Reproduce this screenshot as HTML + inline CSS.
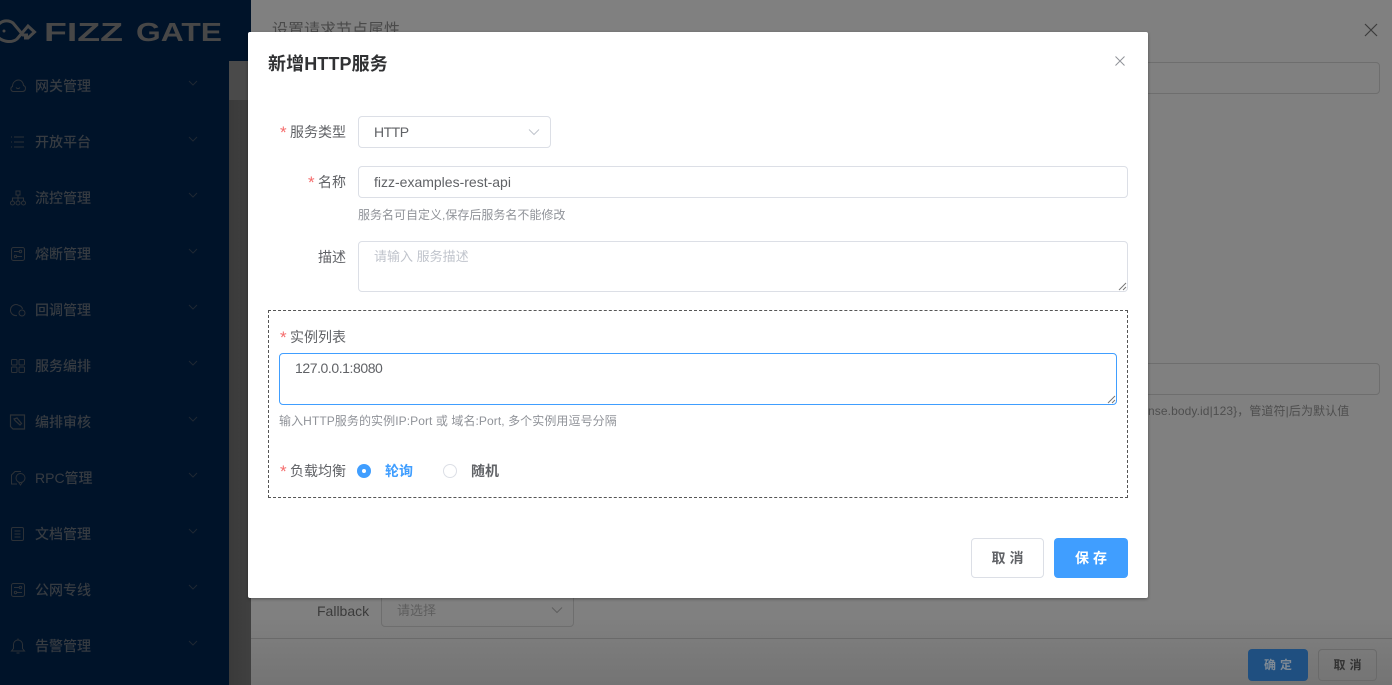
<!DOCTYPE html>
<html lang="zh-CN">
<head>
<meta charset="utf-8">
<title>新增HTTP服务</title>
<style>
html,body{margin:0;padding:0;width:1392px;height:685px;overflow:hidden;background:#808080}
body{position:relative;font-family:"Liberation Sans","Noto Sans CJK SC",sans-serif;font-size:14px;color:#606266}
.a{position:absolute;box-sizing:border-box;white-space:nowrap}
.t{position:absolute;white-space:nowrap;line-height:20px}
.side{left:0;top:0;width:229px;height:685px;background:#001329}
.navtop{left:229px;top:0;width:22px;height:61px;background:#001329}
.strip{left:229px;top:61px;width:22px;height:624px;background:linear-gradient(90deg,#3a3a3a,#404040)}
.strip2{left:229px;top:61px;width:22px;height:39px;background:#4a4a4a}
.panel{left:251px;top:0;width:1141px;height:685px;background:linear-gradient(180deg,#808080 0,#808080 90%,#747474 100%)}
.mi{position:absolute;left:35px;color:#363b41;font-size:14px;line-height:20px;font-weight:500}
.ic{position:absolute;left:9px;width:18px;height:18px;fill:none;stroke:#2c3137;stroke-width:1}
.ch{position:absolute;left:188px;width:10px;height:7px;fill:none;stroke:#1e2833;stroke-width:1}
.modal{left:248px;top:32px;width:900px;height:566px;background:#fff;border-radius:2px;box-shadow:0 1px 3px rgba(0,0,0,.35)}
.inp{border:1px solid #dcdfe6;border-radius:4px;background:#fff}
.lab{color:#606266;font-size:14px}
.star{color:#f56c6c;font-size:17px;font-weight:400}
.help{color:#909399;font-size:12px}
.btn{border-radius:4px;text-align:center;font-size:14px;letter-spacing:4px;text-indent:4px;font-weight:700}
</style>
</head>
<body>

<div class="a panel"></div>
<div class="t" style="left:272px;top:21px;font-size:16px;color:#4a4a4a">设置请求节点属性</div>
<svg class="a" style="left:1364px;top:23px" width="14" height="14" fill="none" stroke="#3c3c3c" stroke-width="1.2"><path d="M1 1L13 13M13 1L1 13"/></svg>
<div class="a" style="left:1100px;top:62px;width:280px;height:32px;border:1px solid #6e6e6e;border-radius:4px"></div>
<div class="a" style="left:1100px;top:363px;width:280px;height:32px;border:1px solid #6e6e6e;border-radius:4px"></div>
<div class="t" style="left:1148px;top:401px;font-size:12px;letter-spacing:.1px;color:#4e4e4e">nse.body.id|123}，管道符|后为默认值</div>
<div class="t" style="left:317px;top:601px;color:#3b3b3b">Fallback</div>
<div class="a" style="left:381px;top:590px;width:193px;height:37px;border:1px solid #6e6e6e;border-radius:4px"></div>
<div class="t" style="left:397px;top:601px;font-size:13px;color:#5e5e5e">请选择</div>
<svg class="a" style="left:550px;top:606px" width="14" height="9" fill="none" stroke="#5e5e5e"><path d="M2 1.500L7 6.500L12 1.500"/></svg>
<div class="a" style="left:251px;top:638px;width:1141px;height:1px;background:#6a6a6a"></div>
<div class="a btn" style="left:1248px;top:649px;width:60px;height:32px;line-height:32px;background:#1f4f80;color:#7f8a95;font-size:12px">确定</div>
<div class="a btn" style="left:1318px;top:649px;width:59px;height:32px;line-height:30px;border:1px solid #6a6a6a;color:#333;font-size:12px">取消</div>

<div class="a navtop"></div>
<div class="a strip"></div>
<div class="a strip2"></div>
<div class="a side"></div>

<svg class="a" style="left:0;top:0" width="40" height="60" fill="none" stroke="#474747" stroke-width="3"><path d="M-1 24C3 20 9 20 13 23L23 35H28"/><path d="M-1 38C4 42 12 43 17 39L28 26L34.500 32L28 38H24"/><circle cx="4" cy="31" r="1.500" fill="#474747" stroke="none"/></svg>
<svg class="a" style="left:44px;top:16px" width="182" height="30"><text x="0" y="25" font-family="Liberation Sans, sans-serif" font-weight="700" font-size="26" fill="#474747" textLength="79" lengthAdjust="spacingAndGlyphs">FIZZ</text><text x="92" y="25" font-family="Liberation Sans, sans-serif" font-weight="700" font-size="26" fill="#474747" textLength="86" lengthAdjust="spacingAndGlyphs">GATE</text></svg>

<svg class="ic" style="top:77px" viewBox="0 0 18 18"><path d="M4.500 14.500C1.500 14.500 1 10.500 3.500 9.500C3.500 5 7 3 9.500 3C12.500 3 14.500 6 14.500 8.500C17.500 9.500 17 14.500 13.500 14.500Z"/><path d="M7 10.500C8 12 10 12 11 10.500"/></svg>
<div class="mi" style="top:76px">网关管理</div>
<svg class="ch" style="top:80px" viewBox="0 0 10 7"><path d="M1 1L5 5L9 1"/></svg>

<svg class="ic" style="top:133px" viewBox="0 0 18 18"><path d="M5 4H15M5 9H15M5 14H15M2 4H3M2 9H3M2 14H3"/></svg>
<div class="mi" style="top:132px">开放平台</div>
<svg class="ch" style="top:136px" viewBox="0 0 10 7"><path d="M1 1L5 5L9 1"/></svg>

<svg class="ic" style="top:189px" viewBox="0 0 18 18"><rect x="7" y="2" width="4" height="4"/><rect x="1.500" y="12" width="4" height="4" rx="2"/><rect x="7" y="12" width="4" height="4" rx="2"/><rect x="12.500" y="12" width="4" height="4" rx="2"/><path d="M9 6V12M3.500 12V9H14.500V12"/></svg>
<div class="mi" style="top:188px">流控管理</div>
<svg class="ch" style="top:192px" viewBox="0 0 10 7"><path d="M1 1L5 5L9 1"/></svg>

<svg class="ic" style="top:245px" viewBox="0 0 18 18"><rect x="2.500" y="2.500" width="13" height="13" rx="2"/><path d="M5 6.500H10M8 11.500H13"/><circle cx="11.500" cy="6.500" r="1.200"/><circle cx="6.500" cy="11.500" r="1.200"/></svg>
<div class="mi" style="top:244px">熔断管理</div>
<svg class="ch" style="top:248px" viewBox="0 0 10 7"><path d="M1 1L5 5L9 1"/></svg>

<svg class="ic" style="top:301px" viewBox="0 0 18 18"><path d="M10 4.500A5.500 5.500 0 1 0 8 14.500"/><path d="M10 4.500C12 4.800 13 6 13.500 8"/><circle cx="13" cy="12" r="3"/></svg>
<div class="mi" style="top:300px">回调管理</div>
<svg class="ch" style="top:304px" viewBox="0 0 10 7"><path d="M1 1L5 5L9 1"/></svg>

<svg class="ic" style="top:357px" viewBox="0 0 18 18"><rect x="2.500" y="2.500" width="5.500" height="5.500" rx="1"/><rect x="10" y="2.500" width="5.500" height="5.500" rx="1"/><rect x="2.500" y="10" width="5.500" height="5.500" rx="1"/><rect x="10" y="10" width="5.500" height="5.500" rx="1"/></svg>
<div class="mi" style="top:356px">服务编排</div>
<svg class="ch" style="top:360px" viewBox="0 0 10 7"><path d="M1 1L5 5L9 1"/></svg>

<svg class="ic" style="top:413px" viewBox="0 0 18 18"><path d="M4 2H15.500V16H4L1.500 13.500V2H4" stroke-width="1.200"/><path d="M5 6L8 5L12.500 10.500L11 12L6 7.500Z" stroke-width="1.200"/></svg>
<div class="mi" style="top:412px">编排审核</div>
<svg class="ch" style="top:416px" viewBox="0 0 10 7"><path d="M1 1L5 5L9 1"/></svg>

<svg class="ic" style="top:469px" viewBox="0 0 18 18"><path d="M8 15H2.500V6L6 2.500H12"/><circle cx="11.500" cy="9" r="4.500"/><path d="M9.500 13L11.500 16L13.500 13"/></svg>
<div class="mi" style="top:468px">RPC管理</div>
<svg class="ch" style="top:472px" viewBox="0 0 10 7"><path d="M1 1L5 5L9 1"/></svg>

<svg class="ic" style="top:525px" viewBox="0 0 18 18"><rect x="2.500" y="2.500" width="12" height="13" rx="1.500"/><path d="M5.500 6H11.500M5.500 9H11.500M5.500 12H11.500"/></svg>
<div class="mi" style="top:524px">文档管理</div>
<svg class="ch" style="top:528px" viewBox="0 0 10 7"><path d="M1 1L5 5L9 1"/></svg>

<svg class="ic" style="top:581px" viewBox="0 0 18 18"><rect x="2.500" y="2.500" width="13" height="13" rx="2"/><path d="M5 6.500H10M8 11.500H13"/><circle cx="11.500" cy="6.500" r="1.200"/><circle cx="6.500" cy="11.500" r="1.200"/></svg>
<div class="mi" style="top:580px">公网专线</div>
<svg class="ch" style="top:584px" viewBox="0 0 10 7"><path d="M1 1L5 5L9 1"/></svg>

<svg class="ic" style="top:637px" viewBox="0 0 18 18"><path d="M2.500 14H15.500L13.500 11.500V7.500A4.500 4.500 0 0 0 4.500 7.500V11.500Z"/><path d="M9 1.500V3M7.500 16H10.500"/></svg>
<div class="mi" style="top:636px">告警管理</div>
<svg class="ch" style="top:640px" viewBox="0 0 10 7"><path d="M1 1L5 5L9 1"/></svg>

<div class="a modal"></div>
<div class="t" style="left:268px;top:53px;font-size:18px;line-height:22px;font-weight:700;letter-spacing:.1px;color:#303133">新增HTTP服务</div>
<svg class="a" style="left:1115px;top:56px" width="10" height="10" fill="none" stroke="#909399"><path d="M.5 .5L9.500 9.500M9.500 .5L.5 9.500"/></svg>

<div class="t star" style="left:280px;top:123px">*</div>
<div class="t lab" style="left:290px;top:122px">服务类型</div>
<div class="a inp" style="left:358px;top:116px;width:193px;height:32px"></div>
<div class="t" style="left:374px;top:122px;font-size:14px;letter-spacing:-.5px">HTTP</div>
<svg class="a" style="left:527px;top:128px" width="14" height="9" fill="none" stroke="#c0c4cc"><path d="M2 1.500L7 6.500L12 1.500"/></svg>

<div class="t star" style="left:308px;top:173px">*</div>
<div class="t lab" style="left:318px;top:172px">名称</div>
<div class="a inp" style="left:358px;top:166px;width:770px;height:32px"></div>
<div class="t" style="left:374px;top:172px">fizz-examples-rest-api</div>
<div class="t help" style="left:358px;top:205px">服务名可自定义,保存后服务名不能修改</div>

<div class="t lab" style="left:318px;top:247px">描述</div>
<div class="a inp" style="left:358px;top:241px;width:770px;height:51px"></div>
<div class="t" style="left:374px;top:247px;font-size:13px;color:#c0c4cc">请输入 服务描述</div>
<svg class="a" style="left:1118px;top:282px" width="9" height="9" fill="none" stroke="#777"><path d="M1 8L8 1M5 8L8 5"/></svg>

<div class="a" style="left:268px;top:310px;width:860px;height:188px;border:1px dashed #555"></div>
<div class="t star" style="left:280px;top:328px">*</div>
<div class="t lab" style="left:290px;top:327px">实例列表</div>
<div class="a" style="left:279px;top:353px;width:838px;height:52px;border:1px solid #409eff;border-radius:4px;background:#fff"></div>
<div class="t" style="left:295px;top:358px;letter-spacing:-.43px">127.0.0.1:8080</div>
<svg class="a" style="left:1107px;top:395px" width="9" height="9" fill="none" stroke="#777"><path d="M1 8L8 1M5 8L8 5"/></svg>
<div class="t help" style="left:279px;top:411px;letter-spacing:.08px">输入HTTP服务的实例IP:Port 或 域名:Port, 多个实例用逗号分隔</div>

<div class="t star" style="left:280px;top:462px">*</div>
<div class="t lab" style="left:290px;top:461px">负载均衡</div>
<div class="a" style="left:357px;top:464px;width:14px;height:14px;border-radius:50%;background:#409eff"></div>
<div class="a" style="left:362px;top:469px;width:4px;height:4px;border-radius:50%;background:#fff"></div>
<div class="t" style="left:385px;top:461px;color:#409eff;font-weight:700">轮询</div>
<div class="a" style="left:443px;top:464px;width:14px;height:14px;border-radius:50%;border:1px solid #dcdfe6;background:#fff"></div>
<div class="t" style="left:471px;top:461px;color:#606266;font-weight:700">随机</div>

<div class="a btn" style="left:971px;top:538px;width:73px;height:40px;line-height:38px;border:1px solid #dcdfe6;background:#fff;color:#606266">取消</div>
<div class="a btn" style="left:1054px;top:538px;width:74px;height:40px;line-height:40px;background:#409eff;color:#fff">保存</div>

</body>
</html>
